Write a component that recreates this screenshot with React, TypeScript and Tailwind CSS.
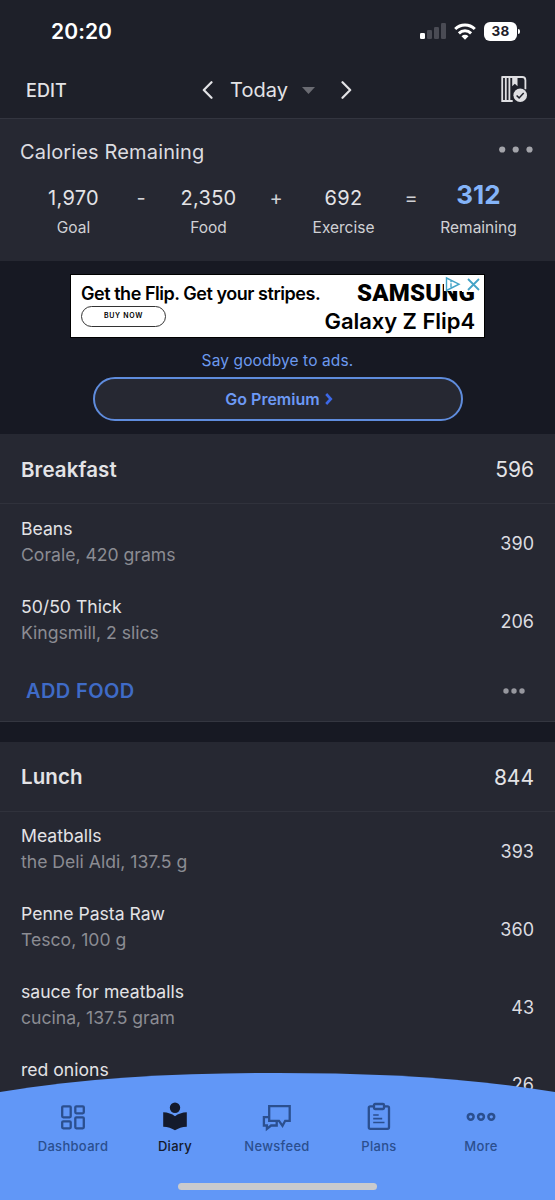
import type { ReactNode } from 'react'

type Food = { name: string; detail?: string; calories: string }
type Meal = { title: string; total: string; foods: Food[]; hasFooter?: boolean }

const meals: Meal[] = [
  {
    title: 'Breakfast',
    total: '596',
    hasFooter: true,
    foods: [
      { name: 'Beans', detail: 'Corale, 420 grams', calories: '390' },
      { name: '50/50 Thick', detail: 'Kingsmill, 2 slics', calories: '206' },
    ],
  },
  {
    title: 'Lunch',
    total: '844',
    foods: [
      { name: 'Meatballs', detail: 'the Deli Aldi, 137.5 g', calories: '393' },
      { name: 'Penne Pasta Raw', detail: 'Tesco, 100 g', calories: '360' },
      { name: 'sauce for meatballs', detail: 'cucina, 137.5 gram', calories: '43' },
      { name: 'red onions', calories: '26' },
    ],
  },
]

function StatusBar() {
  return (
    <div className="flex h-[62px] items-center justify-between pl-[51px] pr-[35px]">
      <span className="text-[21px] font-semibold leading-none tracking-[0.1px] text-white">20:20</span>
      <div className="flex items-center">
        <svg width="26" height="18" viewBox="0 0 26 18" className="mr-[8px]">
          <rect x="0" y="11" width="5" height="6" rx="1.3" fill="#fff" />
          <rect x="7" y="8" width="5" height="9" rx="1.3" fill="#4a4b54" />
          <rect x="14" y="5" width="5" height="12" rx="1.3" fill="#4a4b54" />
          <rect x="21" y="1" width="5" height="16" rx="1.3" fill="#4a4b54" />
        </svg>
        <svg width="22" height="17" viewBox="0 0 22 17" className="mr-[8px]" fill="none" stroke="#fff" strokeWidth="3">
          <path d="M1.2 6a14 14 0 0 1 19.6 0" />
          <path d="M4.9 10.3a8.8 8.8 0 0 1 12.2 0" />
          <path d="M7.5 13.3a5 5 0 0 1 7 0L11 16.8z" fill="#fff" stroke="none" />
        </svg>
        <div className="flex h-[19px] w-[33px] items-center justify-center rounded-[6px] bg-white pt-px text-[13.5px] font-bold leading-none tracking-[0.2px] text-[#1e2029]">
          38
        </div>
        <div className="ml-px h-[5px] w-[2px] rounded-r-full bg-white" />
      </div>
    </div>
  )
}

function Header() {
  return (
    <header className="h-[119px] border-b border-[#33353f] bg-[#1e2029]">
      <StatusBar />
      <div className="grid h-[56px] grid-cols-[1fr_auto_1fr] items-center pl-[26px] pr-[27px] text-[#e3e3e6]">
        <span className="pt-[2px] text-[18px] font-medium leading-none tracking-[0.1px]">EDIT</span>
        <div className="flex items-center">
          <svg width="11" height="18" viewBox="0 0 11 18" fill="none" stroke="currentColor" strokeWidth="2.2" strokeLinecap="round" strokeLinejoin="round">
            <path d="M9.5 1.2 1.8 9l7.7 7.8" />
          </svg>
          <span className="ml-[17px] text-[20px] leading-none">Today</span>
          <svg width="13" height="7" viewBox="0 0 13 7" className="ml-[14px]" fill="#6a6b72">
            <path d="M0 0h13L6.5 7z" />
          </svg>
          <svg width="11" height="18" viewBox="0 0 11 18" className="ml-[26px]" fill="none" stroke="currentColor" strokeWidth="2.2" strokeLinecap="round" strokeLinejoin="round">
            <path d="M1.5 1.2 9.2 9l-7.7 7.8" />
          </svg>
        </div>
        <svg width="27" height="28" viewBox="0 0 27 28" className="justify-self-end">
          <path d="M1.2 1h20q3.2 0 3.2 3.2v9M1.2 .2V25h10.500M4.800 1v24M8.400 1v24" fill="none" stroke="#dfdfe2" strokeWidth="1.8" />
          <path d="M11.200 1h5.300v9.200l-2.650-2.400-2.650 2.400z" fill="#dfdfe2" />
          <circle cx="19.200" cy="19.300" r="6.800" fill="#dfdfe2" />
          <path d="m15.600 19.500 2.500 2.400 4.600-4.800" fill="none" stroke="#1e2029" strokeWidth="1.500" />
        </svg>
      </div>
    </header>
  )
}

function Stat({ value, label, highlight }: { value: string; label: string; highlight?: boolean }) {
  return (
    <div className="flex w-[92px] flex-col items-center">
      <span
        className={
          highlight
            ? 'flex h-[30px] items-center pb-[6px] text-[26px] font-bold leading-none text-[#84b4f8]'
            : 'flex h-[30px] items-center text-[20px] tracking-[0.3px] text-[#e3e3e6]'
        }
      >
        {value}
      </span>
      <span className="flex h-[30px] items-center text-[15.5px] text-[#d0d1d5]">{label}</span>
    </div>
  )
}

function Operator({ children }: { children: ReactNode }) {
  return <span className="flex h-[30px] w-[43px] items-center justify-center text-[20px] text-[#d0d1d5]">{children}</span>
}

function Summary() {
  return (
    <section className="h-[142px] bg-[#262832] pt-[19px]">
      <div className="flex h-[26px] items-center justify-between pl-[20px] pr-[22px]">
        <h1 className="pt-px text-[20px] leading-none tracking-[0.15px] text-[#dcdce0]">Calories Remaining</h1>
        <svg width="34" height="7" viewBox="0 0 34 7" className="mb-[3px]" fill="#a3a4aa">
          <circle cx="3.2" cy="3.5" r="3.1" />
          <circle cx="16.7" cy="3.5" r="3.1" />
          <circle cx="30.5" cy="3.5" r="3.1" />
        </svg>
      </div>
      <div className="mt-[19px] flex pl-[27.5px]">
        <Stat value="1,970" label="Goal" />
        <Operator>-</Operator>
        <Stat value="2,350" label="Food" />
        <Operator>+</Operator>
        <Stat value="692" label="Exercise" />
        <Operator>=</Operator>
        <Stat value="312" label="Remaining" highlight />
      </div>
    </section>
  )
}

function Ad() {
  return (
    <section className="flex h-[173px] flex-col items-center pt-[13px]">
      <div className="relative flex h-[64px] w-[415px] justify-between border border-black bg-white pl-[10px] pr-[9px] text-black">
        <div className="pt-[9px]">
          <p className="whitespace-nowrap text-[18px] font-semibold leading-[20px] tracking-[-0.46px]">Get the Flip. Get your stripes.</p>
          <div className="mt-[2px] flex h-[21px] w-[85px] items-center justify-center rounded-full border border-[#333] text-[7px] font-semibold tracking-[0.7px]">
            BUY NOW
          </div>
        </div>
        <div className="flex flex-col items-end pt-[6px]">
          <p className="font-['Roboto','Liberation_Sans',sans-serif] text-[24px] font-black leading-[24px] tracking-[0.2px]">SAMSUNG</p>
          <p className="mt-[4px] whitespace-nowrap text-[22px] font-semibold leading-[24px] tracking-[-0.05px]">Galaxy Z Flip4</p>
        </div>
        <svg width="38" height="17" viewBox="0 0 38 17" className="absolute right-[2px] top-0" fill="none" stroke="#43a3c7" strokeWidth="1.4">
          <path d="M0 0h38v17H18v-1H0z" fill="#fff" stroke="none" />
          <path d="M2.5 3v12.5L15 9.2zM7 8.2v4M7 6v1.2" />
          <path d="m24 4 11 11M35 4 24 15" strokeWidth="1.8" />
        </svg>
      </div>
      <p className="mt-[13px] text-[15.5px] leading-[20px] tracking-[0.12px] text-[#6c99ef]">Say goodbye to ads.</p>
      <button className="mt-[6px] flex h-[44px] w-[370px] items-center justify-center rounded-full border-2 border-[#5f8cdd] bg-[#262832] pl-[3px] text-[16px] font-semibold text-[#6c99f5]">
        Go Premium
        <svg width="8" height="12" viewBox="0 0 8 12" className="ml-[5px]" fill="none" stroke="#3c68e8" strokeWidth="2.6">
          <path d="m1.2 1 4.6 5-4.6 5" />
        </svg>
      </button>
    </section>
  )
}

function MealSection({ meal }: { meal: Meal }) {
  return (
    <section className="mb-[20px] border-b border-[#343640] bg-[#262832]">
      <div className="flex h-[70px] items-center justify-between border-b border-[#30323c] px-[21px] pt-[3px] text-[#e3e3e6]">
        <h2 className="text-[20.5px] font-semibold tracking-[0.1px]">{meal.title}</h2>
        <span className="text-[21px]">{meal.total}</span>
      </div>
      {meal.foods.map((food) => (
        <div key={food.name} className="flex h-[77.8px] items-center justify-between px-[21px]">
          <div className="h-[54px] text-[17.6px] leading-[26px]">
            <p className="text-[#e3e3e6]">{food.name}</p>
            {food.detail && <p className="text-[#8b8c93]">{food.detail}</p>}
          </div>
          <span className="pt-[2px] text-[18px] text-[#dcdce0]">{food.calories}</span>
        </div>
      ))}
      {meal.hasFooter && (
        <div className="flex h-[61px] items-center justify-between pl-[26px] pr-[30px] pt-[2px]">
          <span className="text-[20px] font-semibold tracking-[0.4px] text-[#3f6bc7]">ADD FOOD</span>
          <svg width="22" height="6" viewBox="0 0 22 6" fill="#96979e">
            <circle cx="3" cy="3" r="2.7" />
            <circle cx="11" cy="3" r="2.7" />
            <circle cx="19" cy="3" r="2.7" />
          </svg>
        </div>
      )}
    </section>
  )
}

function Tab({ label, active, children }: { label: string; active?: boolean; children: ReactNode }) {
  return (
    <div className={`flex w-[102px] flex-col items-center ${active ? 'text-[#141a2c]' : 'text-[#2b4f8f]'}`}>
      <svg width="32" height="32" viewBox="0 0 32 32" fill="none" stroke="currentColor" strokeWidth="2.3">
        {children}
      </svg>
      <span className="mt-[4px] text-[13px] font-medium leading-[18px] tracking-[0.3px]">{label}</span>
    </div>
  )
}

function TabBar() {
  return (
    <nav className="absolute inset-x-0 bottom-0 h-[128px]">
      <svg width="555" height="128" viewBox="0 0 555 128" className="absolute inset-0">
        <path d="M0 20C90 5 185 1 277.5 1S465 5 555 20V128H0z" fill="#6197f7" />
      </svg>
      <div className="relative flex justify-center pr-px pt-[29px]">
        <Tab label="Dashboard">
          <rect x="5.2" y="5.3" width="8.5" height="11" rx="1" />
          <rect x="18.3" y="5.3" width="8.5" height="7" rx="1" />
          <rect x="5.2" y="20.3" width="8.5" height="7" rx="1" />
          <rect x="18.3" y="16.3" width="8.5" height="11" rx="1" />
        </Tab>
        <Tab label="Diary" active>
          <circle cx="16" cy="6.8" r="5.2" fill="currentColor" stroke="none" />
          <path d="M4.2 11.2q7 .3 11.8 4 4.8-3.7 11.8-4v14.500q-7 .3-11.800 3.600-4.800-3.300-11.800-3.600z" fill="currentColor" stroke="none" />
        </Tab>
        <Tab label="Newsfeed">
          <path d="M8.200 5.200H28.700v14.600h-4.500l-2.700 5-3.500-5H8.200z" />
          <path d="M8.200 16.200H2.900v8.300h3v3.300l4.200-3.300h5.600v-4.500" />
        </Tab>
        <Tab label="Plans">
          <rect x="5.800" y="5.300" width="20.200" height="22.500" rx="1.500" />
          <rect x="11" y="3" width="10" height="5" rx="1" fill="#6197f7" />
          <path d="M10.200 14h5.500M10.200 17.700h9M10.200 21.500h11.300" strokeWidth="1.700" />
        </Tab>
        <Tab label="More">
          <circle cx="5.700" cy="15.800" r="2.900" strokeWidth="2.500" />
          <circle cx="16" cy="15.800" r="2.900" strokeWidth="2.500" />
          <circle cx="26.300" cy="15.800" r="2.900" strokeWidth="2.500" />
        </Tab>
      </div>
      <div className="absolute bottom-[10px] left-[178px] h-[7px] w-[199px] rounded-full bg-[#c9cacd]" />
    </nav>
  )
}

export default function App() {
  return (
    <div className="relative h-[1200px] w-[555px] overflow-hidden bg-[#171923] font-['Inter','Liberation_Sans',sans-serif]">
      <Header />
      <Summary />
      <Ad />
      {meals.map((meal) => (
        <MealSection key={meal.title} meal={meal} />
      ))}
      <TabBar />
    </div>
  )
}
